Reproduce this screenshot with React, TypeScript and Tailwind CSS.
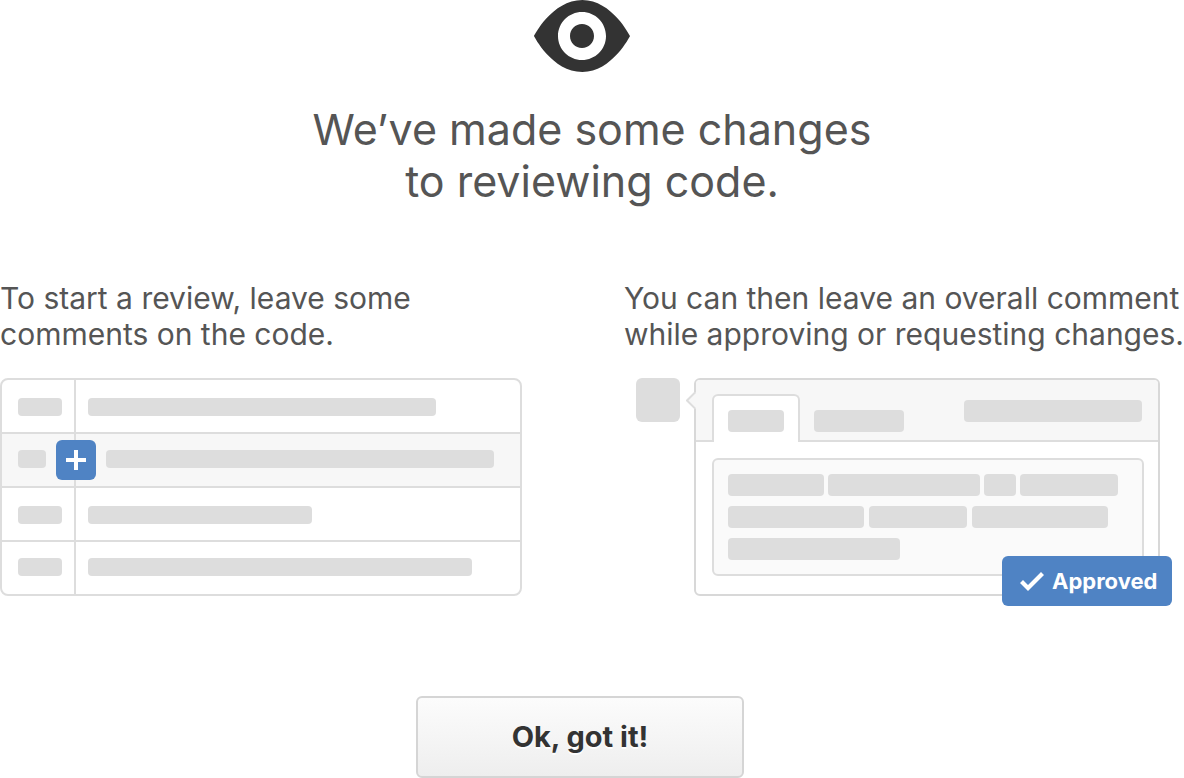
import type { ReactNode } from "react";

type BarProps = { className: string };

function Bar({ className }: BarProps) {
  return <div className={`shrink-0 rounded bg-[#dddddd] ${className}`} />;
}

function EyeIcon() {
  return (
    <svg className="h-[72px] w-24" viewBox="0 2 16 12" fill="#333333" aria-hidden="true">
      <path
        fillRule="evenodd"
        d="M8.06 2C3 2 0 8 0 8s3 6 8.06 6C13 14 16 8 16 8s-3-6-7.94-6zM8 12c-2.2 0-4-1.78-4-4 0-2.2 1.8-4 4-4 2.22 0 4 1.8 4 4 0 2.22-1.78 4-4 4zm2-4c0 1.11-.89 2-2 2-1.11 0-2-.89-2-2 0-1.11.89-2 2-2 1.11 0 2 .89 2 2z"
      />
    </svg>
  );
}

function CheckIcon() {
  return (
    <svg className="h-8 w-6" viewBox="0 0 12 16" fill="currentColor" aria-hidden="true">
      <path fillRule="evenodd" d="M12 5l-8 8-4-4 1.5-1.5L4 10l6.5-6.5z" />
    </svg>
  );
}

function PlusIcon() {
  return (
    <svg className="size-5" viewBox="0 0 20 20" fill="currentColor" aria-hidden="true">
      <path d="M8 0h4v8h8v4h-8v8H8v-8H0V8h8z" />
    </svg>
  );
}

const codeRows = [
  { row: "", pad: "pt-4.5", number: "w-11", inset: "pl-3", code: "w-[348px]" },
  { row: "bg-[#f7f7f7]", pad: "pt-4", number: "w-7", inset: "pl-[30px]", code: "w-[388px]", commented: true },
  { row: "", pad: "pt-4.5", number: "w-11", inset: "pl-3", code: "w-[224px]" },
  { row: "", pad: "pt-4", number: "w-11", inset: "pl-3", code: "w-[384px]" },
];

function DiffIllustration() {
  return (
    <div className="w-[522px] divide-y-2 divide-[#dddddd] rounded-lg border-2 border-[#dddddd] bg-white">
      {codeRows.map((r, i) => (
        <div key={i} className={`relative flex ${r.row}`}>
          <div className={`h-[52px] w-[74px] border-r-2 border-[#dddddd] pl-4 ${r.pad}`}>
            <Bar className={`h-4.5 ${r.number}`} />
          </div>
          <div className={`${r.pad} ${r.inset}`}>
            <Bar className={`h-4.5 ${r.code}`} />
          </div>
          {r.commented && (
            <span className="absolute top-1.5 left-[54px] flex size-10 items-center justify-center rounded-md bg-[#4f83c4] text-white">
              <PlusIcon />
            </span>
          )}
        </div>
      ))}
    </div>
  );
}

function ReviewIllustration() {
  return (
    <div className="flex justify-end gap-3.5 pr-6">
      <div className="size-11 rounded-md bg-[#dddddd]" />
      <div className="relative w-[466px] rounded-md border-2 border-[#d8d8d8] bg-white">
        <div className="flex h-[62px] items-start justify-between rounded-t border-b-2 border-[#dddddd] bg-[#f7f7f7] px-4">
          <div className="flex gap-3.5 pt-3.5">
            <div className="h-12 rounded-t-md border-2 border-b-0 border-[#dddddd] bg-white px-3.5 pt-3.5">
              <Bar className="h-[22px] w-14" />
            </div>
            <div className="pt-4">
              <Bar className="h-[22px] w-[90px]" />
            </div>
          </div>
          <div className="pt-5">
            <Bar className="h-[22px] w-[178px]" />
          </div>
        </div>
        <div className="pt-4 pr-3.5 pb-4.5 pl-4">
          <div className="flex h-[118px] flex-col gap-2.5 rounded-md border-2 border-[#dddddd] bg-[#fafafa] p-3.5">
            <div className="flex gap-1">
              <Bar className="h-[22px] w-24" />
              <Bar className="h-[22px] w-[152px]" />
              <Bar className="h-[22px] w-8" />
              <Bar className="h-[22px] w-[98px]" />
            </div>
            <div className="flex gap-[5px]">
              <Bar className="h-[22px] w-[136px]" />
              <Bar className="h-[22px] w-[98px]" />
              <Bar className="h-[22px] w-[136px]" />
            </div>
            <Bar className="h-[22px] w-[172px]" />
          </div>
        </div>
        <svg className="absolute top-3 -left-2.5 h-4.5 w-2.5" viewBox="0 0 10 18" aria-hidden="true">
          <path d="M8.5 .8 10 0V17l-1.5-.8L1.4 8.5z" fill="#f7f7f7" />
          <path d="M9.4.1 1 8.5l8.4 8.4" fill="none" stroke="#dddddd" strokeWidth="2" />
        </svg>
        <span className="absolute -right-3.5 -bottom-3 flex h-[50px] w-[170px] items-center gap-2 rounded-md bg-[#4f83c4] pl-4.5 text-[22px] font-bold text-white">
          <CheckIcon />
          Approved
        </span>
      </div>
    </div>
  );
}

function Step({ children, illustration }: { children: ReactNode; illustration: ReactNode }) {
  return (
    <section className="flex flex-col gap-[26px]">
      <p className="text-[30px] leading-9 whitespace-nowrap">{children}</p>
      {illustration}
    </section>
  );
}

export default function App() {
  return (
    <main className="flex flex-col overflow-x-hidden bg-white font-['Inter',sans-serif] text-[#555555]">
      <div className="flex justify-center pr-5">
        <EyeIcon />
      </div>
      <h1 className="pt-[31px] text-center text-[43px] leading-[52px] font-normal">
        We’ve made some changes
        <br />
        to reviewing code.
      </h1>
      <div className="mx-auto flex w-full max-w-[1184px] justify-between pt-[73px]">
        <Step illustration={<DiffIllustration />}>
          To start a review, leave some
          <br />
          comments on the code.
        </Step>
        <Step illustration={<ReviewIllustration />}>
          You can then leave an overall comment
          <br />
          while approving or requesting changes.
        </Step>
      </div>
      <div className="flex justify-center pt-[100px] pr-6">
        <button
          type="button"
          className="h-[82px] w-[328px] rounded-md border-2 border-[#d5d5d5] bg-linear-to-b from-[#fcfcfc] to-[#eeeeee] text-[29px] font-bold text-[#333333] text-shadow-[0_2px_0_rgb(255_255_255/0.9)]"
        >
          Ok, got it!
        </button>
      </div>
    </main>
  );
}
